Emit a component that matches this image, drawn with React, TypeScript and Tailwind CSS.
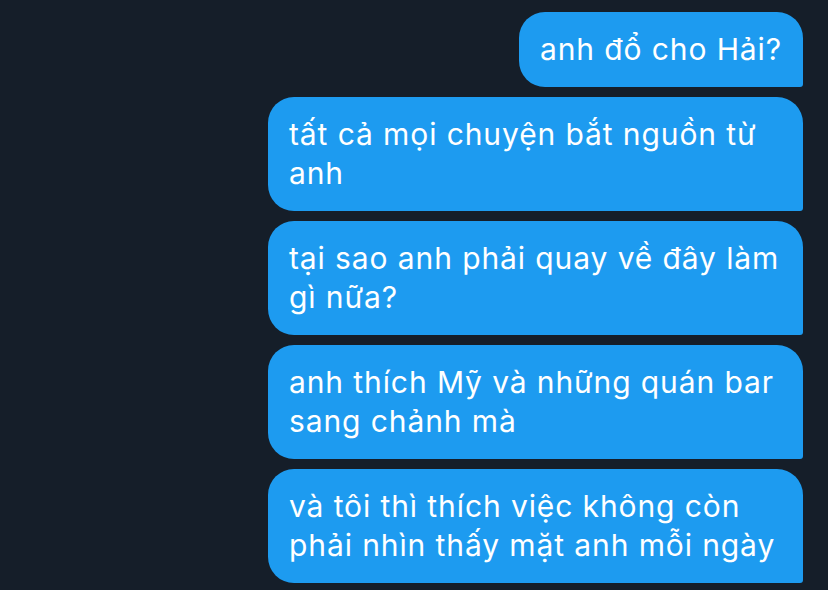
const messages = [
  "anh đổ cho Hải?",
  "tất cả mọi chuyện bắt nguồn từ anh",
  "tại sao anh phải quay về đây làm gì nữa?",
  "anh thích Mỹ và những quán bar sang chảnh mà",
  "và tôi thì thích việc không còn phải nhìn thấy mặt anh mỗi ngày",
];

export default function App() {
  return (
    <div
      className="min-h-[590px] w-[828px] bg-[#151e29] pt-3 pr-[25px] flex flex-col items-end gap-[10px]"
      style={{ fontFamily: "Inter, 'Noto Sans', sans-serif" }}
    >
      {messages.map((m, i) => (
        <div
          key={i}
          className="max-w-[535px] bg-[#1d9bf0] text-white text-[30px] leading-[39px] tracking-[0.9px] px-[21px] py-[18px] rounded-[26px] rounded-br-[3px]"
        >
          {m}
        </div>
      ))}
    </div>
  );
}
